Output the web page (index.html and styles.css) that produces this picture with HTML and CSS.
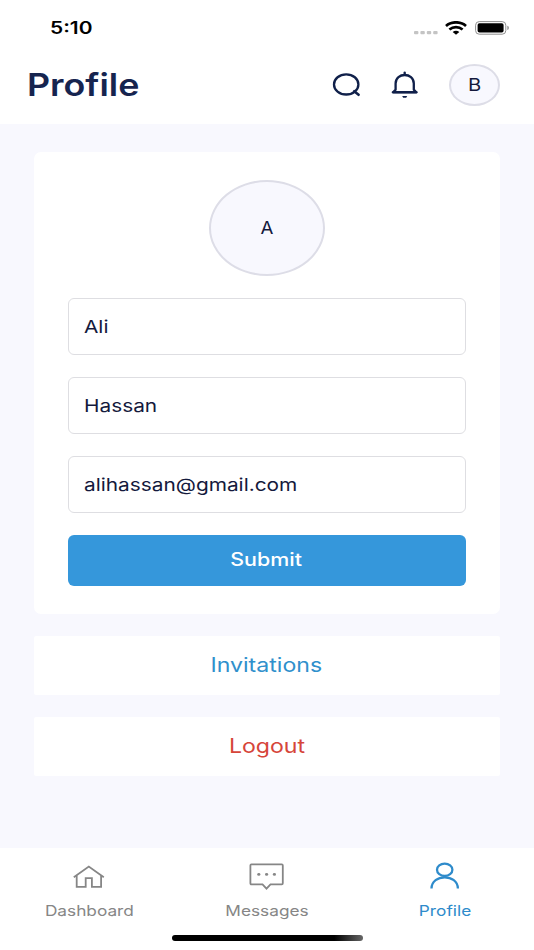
FILE: index.html
```html
<!DOCTYPE html>
<html lang="en">
<head>
    <meta charset="UTF-8">
    <meta name="viewport" content="width=device-width, initial-scale=1.0">
    <title>Profile</title>
    <link rel="stylesheet" href="styles.css">
</head>
<body>
    <!-- Status bar -->
    <div class="status-bar">
        <span class="wide time">5:10</span>
        <div class="status-icons">
            <svg width="24" height="4" viewBox="0 0 24 4" fill="#c4c4c4">
                <rect x="0" y="0" width="4.4" height="3.3" rx="1"/>
                <rect x="6.4" y="0" width="4.4" height="3.3" rx="1"/>
                <rect x="12.8" y="0" width="4.4" height="3.3" rx="1"/>
                <rect x="19.2" y="0" width="4.4" height="3.3" rx="1"/>
            </svg>
            <svg class="wifi" width="22" height="14" viewBox="0 0 22 14" fill="none" stroke="#000" stroke-width="2.7">
                <path d="M1 4.9C6.4 0.1 15.6 0.1 21 4.9"/>
                <path d="M4.4 8.5C8.2 5.4 13.8 5.4 17.6 8.5"/>
                <path d="M7.7 11C9.6 9.2 12.4 9.2 14.3 11L11 13.8Z" fill="#000" stroke="none"/>
            </svg>
            <svg class="battery" width="35" height="14" viewBox="0 0 35 14">
                <rect x="0.6" y="0.6" width="30.2" height="12.6" rx="3.6" fill="#fff" stroke="#8e8e8e"/>
                <rect x="2.6" y="2.2" width="26" height="9.4" rx="1.8" fill="#000"/>
                <path d="M32.3 4.8C34.4 5.2 34.4 8.6 32.3 9Z" fill="#8e8e8e"/>
            </svg>
        </div>
    </div>

    <!-- Header -->
    <header class="header">
        <h1 class="wide title">Profile</h1>
        <div class="header-icons">
            <svg class="search" width="30" height="26" viewBox="0 0 30 26" fill="none" stroke="#10204a" stroke-width="2.3" stroke-linecap="round">
                <ellipse cx="15.2" cy="12.4" rx="12.2" ry="10.1"/>
                <path d="M23.2 19.2L27.6 22.8" stroke-width="2.6"/>
            </svg>
            <svg class="bell" width="28" height="28" viewBox="0 0 28 28" fill="none" stroke="#10204a" stroke-width="2.3" stroke-linecap="round">
                <path d="M5.6 18.6V12.4C5.6 1.2 23.8 1.2 23.8 12.4V18.6L26.2 21.2H3.2Z" stroke-linejoin="round"/>
                <path d="M2.8 21.3H26.6"/>
                <path d="M14.7 1.6V3.8"/>
                <path d="M12.2 24.9H17.2L16.2 26.8H13.2Z" fill="#10204a" stroke="none"/>
            </svg>
            <div class="avatar small"><span class="wide">B</span></div>
        </div>
    </header>

    <!-- Content -->
    <main class="content">
        <form class="card">
            <div class="avatar large"><span class="wide">A</span></div>
            <div class="field"><span class="wide">Ali</span></div>
            <div class="field"><span class="wide">Hassan</span></div>
            <div class="field"><span class="wide">alihassan@gmail.com</span></div>
            <button type="button" class="submit"><span class="wide">Submit</span></button>
        </form>
        <a class="link-row invitations"><span class="wide">Invitations</span></a>
        <a class="link-row logout"><span class="wide">Logout</span></a>
    </main>

    <!-- Bottom tabs -->
    <footer class="footer">
        <nav class="tabs">
            <a class="tab">
                <svg width="36" height="30" viewBox="0 0 36 30" fill="none" stroke="#868686" stroke-width="1.8">
                    <path d="M2.8 16.3L17.8 5.6L32.8 16.3"/>
                    <path d="M5.7 14.5V25.8H14.7V17.2H20.9V25.8H30.1V14.5"/>
                </svg>
                <span class="wide">Dashboard</span>
            </a>
            <a class="tab">
                <svg width="36" height="30" viewBox="0 0 36 30" fill="none" stroke="#868686" stroke-width="1.8">
                    <path d="M2.4 3.4H32.8Q33.8 3.4 33.8 4.4V22.3Q33.8 23.3 32.8 23.3H21.5L17.5 27.6L13.5 23.3H2.4Q1.4 23.3 1.4 22.3V4.4Q1.4 3.4 2.4 3.4Z"/>
                    <g fill="#868686" stroke="none">
                        <ellipse cx="9.8" cy="13.4" rx="1.6" ry="1.3"/>
                        <ellipse cx="17.6" cy="13.4" rx="1.6" ry="1.3"/>
                        <ellipse cx="25.4" cy="13.4" rx="1.6" ry="1.3"/>
                    </g>
                </svg>
                <span class="wide">Messages</span>
            </a>
            <a class="tab active">
                <svg width="36" height="30" viewBox="0 0 36 30" fill="none" stroke="#2e8bcb" stroke-width="2.3">
                    <ellipse cx="17.7" cy="8.8" rx="7.7" ry="6.2"/>
                    <path d="M4.5 27.6C4.5 12.5 30.9 12.5 30.9 27.6"/>
                </svg>
                <span class="wide">Profile</span>
            </a>
        </nav>
        <div class="home-indicator"></div>
    </footer>
</body>
</html>
```
FILE: styles.css
```css
* {
    box-sizing: border-box;
}

body {
    margin: 0;
    height: 950px;
    display: flex;
    flex-direction: column;
    font-family: Inter, "Liberation Sans", sans-serif;
    background-color: #f8f8fe;
    color: #14193c;
    overflow: hidden;
}

/* Extended lettering */
.wide {
    display: inline-block;
    white-space: nowrap;
    transform: scaleX(1.19);
}

/* Status bar */
.status-bar {
    height: 52px;
    padding: 4px 24px 0 50px;
    display: flex;
    justify-content: space-between;
    align-items: center;
    background-color: #fff;
}

.time {
    font-size: 17px;
    font-weight: 600;
    color: #000;
    transform: scaleX(1.23);
    transform-origin: left;
}

.status-icons {
    display: flex;
    align-items: flex-end;
}

.wifi {
    margin-left: 7px;
}

.battery {
    margin-left: 8px;
}

/* Header */
.header {
    height: 72px;
    padding: 0 34px 7px 27px;
    display: flex;
    justify-content: space-between;
    align-items: center;
    background-color: #fff;
}

.title {
    margin: 0;
    font-size: 31px;
    font-weight: 600;
    color: #16244f;
    transform: scaleX(1.155);
    transform-origin: left;
}

.header-icons {
    display: flex;
    align-items: center;
}

.bell {
    margin: 0 31px 0 29px;
}

.avatar {
    display: flex;
    justify-content: center;
    align-items: center;
    border-style: solid;
    border-color: #dddde7;
    border-radius: 50%;
    background-color: #f8f8fe;
    font-size: 17px;
}

.small {
    width: 51px;
    height: 42px;
    border-width: 2px;
}

.large {
    width: 116px;
    height: 96px;
    margin: 0 auto 22px;
    border-width: 2px;
}

.large .wide {
    transform: scaleX(1.1);
}

/* Content */
.content {
    flex: 1;
    padding: 28px 34px 0;
}

.card {
    height: 462px;
    padding: 28px 34px;
    border-radius: 7px;
    background-color: #fff;
}

.field {
    height: 57px;
    margin-bottom: 22px;
    padding-left: 15px;
    display: flex;
    align-items: center;
    border: 1px solid #dedee2;
    border-radius: 6px;
    font-size: 17.5px;
}

.field .wide {
    transform-origin: left;
}

.submit {
    width: 100%;
    height: 51px;
    padding: 0 1px 2px 0;
    border: none;
    border-radius: 6px;
    background-color: #3597db;
    color: #fff;
    font-family: inherit;
    font-size: 18px;
    font-weight: 500;
}

.link-row {
    height: 59px;
    margin-top: 22px;
    padding: 0 1px 1px 0;
    display: flex;
    justify-content: center;
    align-items: center;
    border-radius: 2px;
    background-color: #fff;
    font-size: 20px;
}

.link-row .wide {
    transform: scaleX(1.155);
}

.invitations {
    color: #3090cc;
}

.logout {
    color: #d6453a;
}

/* Bottom tabs */
.footer {
    height: 102px;
    padding-top: 13px;
    background-color: #fff;
}

.tabs {
    display: flex;
}

.tab {
    flex: 1;
    display: flex;
    flex-direction: column;
    align-items: center;
    gap: 11px;
    font-size: 14.5px;
    line-height: 18px;
    color: #868686;
}

.active {
    color: #2e8bcb;
}

.home-indicator {
    width: 191px;
    height: 6px;
    margin: 15px auto 0;
    border-radius: 3px;
    background: linear-gradient(90deg, #000 85%, #666 100%);
}
```
